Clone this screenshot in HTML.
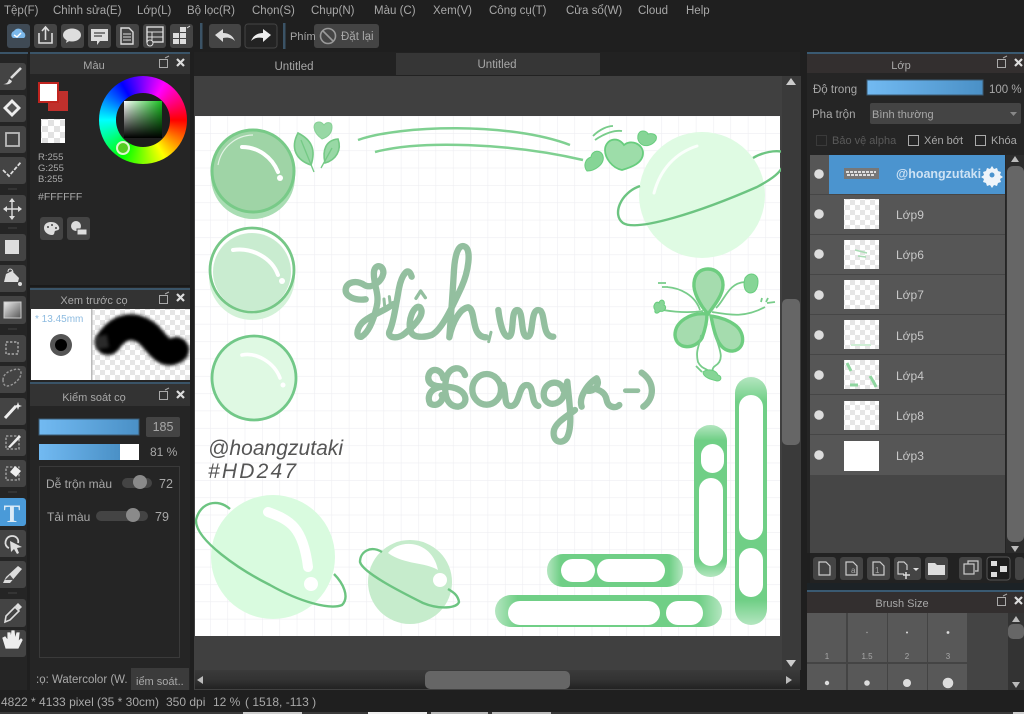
<!DOCTYPE html>
<html><head><meta charset="utf-8"><style>
html,body{margin:0;padding:0;background:#1f1f1f;width:1024px;height:714px;overflow:hidden}
#r{position:relative;width:1024px;height:714px;overflow:hidden;filter:blur(.35px)}
svg{position:absolute;left:0;top:0;font-size:11.5px}
text{font-family:"Liberation Sans",sans-serif;fill:#a8a8a8}
#wheel{position:absolute;left:99px;top:76px;width:88px;height:88px;border-radius:50%;background:conic-gradient(from 30deg,#f0f,#f00 60deg,#ff0 120deg,#0f0 180deg,#0ff 240deg,#00f 300deg,#f0f 360deg)}
#hole{position:absolute;left:17px;top:17px;width:54px;height:54px;border-radius:50%;background:#1d1d1d}
#sq{position:absolute;left:25px;top:25px;width:38px;height:37px;background:linear-gradient(to bottom,rgba(0,0,0,0),#000),linear-gradient(to right,#fff,#18c020)}
#sel{position:absolute;left:17px;top:65px;width:10px;height:10px;border:2.5px solid #dff5d0;border-radius:50%;background:#55cc22}
</style></head><body><div id="r">
<svg width="1024" height="714" viewBox="0 0 1024 714">
<defs>
<pattern id="ck" width="12" height="12" patternUnits="userSpaceOnUse"><rect width="12" height="12" fill="#fff"/><rect width="6" height="6" fill="#e2e2e2"/><rect x="6" y="6" width="6" height="6" fill="#e2e2e2"/></pattern>
<pattern id="ck2" width="10" height="10" patternUnits="userSpaceOnUse"><rect width="10" height="10" fill="#fff"/><rect width="5" height="5" fill="#e6e6e6"/><rect x="5" y="5" width="5" height="5" fill="#e6e6e6"/></pattern>
<pattern id="grid" x="210" y="133" width="17.35" height="17.35" patternUnits="userSpaceOnUse"><path d="M0 0V17.35M0 0H17.35" stroke="#eeeef2" stroke-width="1.2" fill="none"/></pattern>
<linearGradient id="blue" x1="0" x2="1" y1="0" y2="0"><stop offset="0" stop-color="#72baf2"/><stop offset="1" stop-color="#4a90c6"/></linearGradient>
<linearGradient id="hsb" x1="0" x2="0" y1="0" y2="1"><stop offset="0" stop-color="#3a3a3a"/><stop offset=".5" stop-color="#333"/><stop offset="1" stop-color="#222"/></linearGradient>
<linearGradient id="gry" x1="0" x2="1" y1="0" y2="1"><stop offset="0" stop-color="#eee"/><stop offset="1" stop-color="#555"/></linearGradient>
<linearGradient id="vp" x1="0" x2="0" y1="0" y2="1"><stop offset="0" stop-color="#b4e6c0"/><stop offset=".1" stop-color="#70cf86"/><stop offset=".9" stop-color="#70cf86"/><stop offset="1" stop-color="#b4e6c0"/></linearGradient>
<linearGradient id="hp" x1="0" x2="1" y1="0" y2="0"><stop offset="0" stop-color="#b4e6c0"/><stop offset=".1" stop-color="#70cf86"/><stop offset=".9" stop-color="#70cf86"/><stop offset="1" stop-color="#b4e6c0"/></linearGradient>
<filter id="b1" filterUnits="userSpaceOnUse" x="80" y="295" width="125" height="100"><feGaussianBlur stdDeviation="1.6"/></filter>
<clipPath id="cv"><rect x="195" y="116" width="586" height="520"/></clipPath>
<clipPath id="blobclip"><rect x="92" y="309" width="98" height="71"/></clipPath>
</defs>

<!-- base -->
<rect width="1024" height="714" fill="#1f1f1f"/>
<!-- menu -->
<g>
<text x="4" y="14">Tệp(F)</text><text x="53" y="14">Chỉnh sửa(E)</text><text x="137" y="14">Lớp(L)</text><text x="187" y="14">Bộ lọc(R)</text><text x="252" y="14">Chọn(S)</text><text x="311" y="14">Chụp(N)</text><text x="374" y="14">Màu (C)</text><text x="433" y="14">Xem(V)</text><text x="489" y="14">Công cụ(T)</text><text x="566" y="14">Cửa sổ(W)</text><text x="638" y="14">Cloud</text><text x="686" y="14">Help</text>
</g>
<!-- toolbar -->
<g fill="#444">
<rect x="7" y="24" width="23" height="24" rx="3" fill="#3f4a55"/><rect x="34" y="24" width="23" height="24" rx="3"/><rect x="61" y="24" width="23" height="24" rx="3"/><rect x="88" y="24" width="23" height="24" rx="3"/><rect x="116" y="24" width="23" height="24" rx="3"/><rect x="143" y="24" width="23" height="24" rx="3"/><rect x="170" y="24" width="23" height="24" rx="3"/>
<rect x="209" y="24" width="32" height="24" rx="3"/><rect x="245" y="24" width="32" height="24" rx="3" fill="#232323" stroke="#444"/><rect x="314" y="24" width="65" height="24" rx="3"/>
</g>
<rect x="200" y="23" width="2.5" height="26" fill="#3b5366"/><rect x="283" y="23" width="2.5" height="26" fill="#3b5366"/>
<!-- toolbar icons -->
<path d="M13 38a4 4 0 0 1 1-7 5 5 0 0 1 9 1 3.5 3.5 0 0 1 1 6z" fill="#7cb8ea"/><path d="M14 35l3 2 4-4" stroke="#fff" stroke-width="1.4" fill="none"/>
<path d="M39 33v10h13V33M45.5 40V28M42 31l3.5-4 3.5 4" stroke="#ddd" stroke-width="1.6" fill="none"/>
<ellipse cx="72" cy="35" rx="9" ry="6.5" fill="#ddd"/><path d="M67 39l-1 4 5-3z" fill="#ddd"/>
<path d="M91 29h17v12h-8l-3 4v-4h-6z" fill="#ddd"/><path d="M94 33h11M94 36h8" stroke="#444" stroke-width="1.3"/>
<path d="M121 28h8l4 4v12h-12z" fill="none" stroke="#ddd" stroke-width="1.4"/><path d="M123 34h8M123 37h8M123 40h8" stroke="#ddd"/>
<rect x="147" y="27" width="16" height="15" fill="none" stroke="#ddd" stroke-width="1.4"/><path d="M147 32h16M147 37h16M152 32v10" stroke="#ddd"/><circle cx="150" cy="43" r="3" fill="#444" stroke="#ddd"/>
<path d="M173 33h6v5h-6zM180 33h6v5h-6zM173 39h6v5h-6zM180 39h6v5h-6zM180 27h6v5h-6z" fill="#ddd"/><path d="M187 28l3-2" stroke="#ddd"/>
<path d="M215 35l8-6v4c6 0 10 3 12 8-3-3-7-4-12-3v4z" fill="#ddd"/>
<path d="M271 35l-8-6v4c-6 0-10 3-12 8 3-3 7-4 12-3v4z" fill="#eee"/>
<text x="290" y="40" font-size="11">Phím</text>
<circle cx="328" cy="36" r="7.5" fill="none" stroke="#999" stroke-width="1.6"/><path d="M323 31l10 10" stroke="#999" stroke-width="1.6"/>
<text x="341" y="40">Đặt lại</text>

<!-- left tool column -->
<rect x="0" y="52" width="27" height="638" fill="#252525"/><rect x="0" y="52" width="28" height="2" fill="#3a5468"/>
<g fill="#444">
<rect x="-4" y="63" width="30" height="27" rx="3"/><rect x="-4" y="95" width="30" height="27" rx="3"/><rect x="-4" y="126" width="30" height="27" rx="3"/><rect x="-4" y="157" width="30" height="27" rx="3"/>
<rect x="-4" y="195" width="30" height="28" rx="3"/><rect x="-4" y="234" width="30" height="27" rx="3"/><rect x="-4" y="265" width="30" height="27" rx="3"/><rect x="-4" y="296" width="30" height="28" rx="3"/>
<rect x="-4" y="335" width="30" height="27" rx="3"/><rect x="-4" y="366" width="30" height="27" rx="3"/><rect x="-4" y="398" width="30" height="27" rx="3"/><rect x="-4" y="429" width="30" height="27" rx="3"/><rect x="-4" y="460" width="30" height="27" rx="3"/>
<rect x="-4" y="498" width="30" height="28" rx="3" fill="#4a9ad8"/><rect x="-4" y="530" width="30" height="27" rx="3"/><rect x="-4" y="561" width="30" height="27" rx="3"/>
<rect x="-4" y="599" width="30" height="28" rx="3"/><rect x="-4" y="630" width="30" height="27" rx="3"/>
</g>
<path d="M8 189h9M8 228h9M8 329h9M8 492h9M8 593h9" stroke="#444"/>
<path d="M21 68L11 78" stroke="#ddd" stroke-width="2.6"/><path d="M3 84c3 0 5-1 6-5l3 2c-1 3-4 4-9 3z" fill="#ddd"/>
<path d="M3 108l9-9 9 9-9 9z" fill="#eee"/><path d="M7 108l5-5 5 5-5 5z" fill="#555"/>
<rect x="6" y="133" width="13" height="13" fill="none" stroke="#bbb" stroke-width="1.8"/>
<path d="M3 170l6 6 12-14" stroke="#ddd" stroke-width="1.8" fill="none" stroke-dasharray="4 1.5"/>
<path d="M12 199v20M4 209h17" stroke="#ddd" stroke-width="1.4" fill="none"/><path d="M12 198l-3 4h6zM12 220l-3-4h6zM3 209l4-3v6zM22 209l-4-3v6z" fill="#ddd"/>
<rect x="5" y="240" width="14" height="14" fill="#ddd"/>
<path d="M4 282l2-8 6-3 7 7-1 4z" fill="#ddd"/><path d="M8 272c0-4 4-4 5 0" stroke="#ddd" fill="none"/><circle cx="20" cy="284" r="2" fill="#ddd"/>
<rect x="4" y="302" width="17" height="16" fill="url(#gry)" stroke="#ccc"/>
<rect x="6" y="342" width="12" height="12" fill="none" stroke="#aaa" stroke-width="1.4" stroke-dasharray="2.4 1.6"/>
<path d="M3 380c0-7 8-10 14-11 4 0 5 4 3 8s-8 9-13 9c-3 0-4-3-4-6z" fill="none" stroke="#999" stroke-width="1.4" stroke-dasharray="2.4 1.6"/>
<path d="M5 418l11-12" stroke="#eee" stroke-width="3"/><path d="M18 402l1 3 3 1-3 1-1 3-1-3-3-1 3-1z" fill="#eee"/>
<rect x="6" y="436" width="13" height="13" fill="none" stroke="#aaa" stroke-width="1.3" stroke-dasharray="2.4 1.6"/><path d="M8 447l11-12 2 2-11 11z" fill="#eee"/>
<rect x="6" y="467" width="13" height="13" fill="none" stroke="#aaa" stroke-width="1.3" stroke-dasharray="2.4 1.6"/><path d="M10 472l5-6 6 5-5 6z" fill="#eee"/>
<text x="12" y="522" text-anchor="middle" style="font-family:'Liberation Serif',serif;font-size:25px;font-weight:bold;fill:#dcebf6">T</text>
<path d="M9 548c-6-2-4-12 3-12 5 0 7 4 6 7" fill="none" stroke="#ddd" stroke-width="1.8"/><path d="M10 541l12 6-5 1 2 5-2 1-3-5-3 3z" fill="#ddd"/>
<path d="M3 583l3-6 12-11 4 3-12 14z" fill="#ddd"/><path d="M5 580l5-5 4 5z" fill="#555"/>
<path d="M5 622l1-6 9-9 4 4-9 9z" fill="none" stroke="#ddd" stroke-width="1.6"/><path d="M15 606l3-3 4 4-3 3z" fill="#ddd"/>
<path d="M6 648l-3-10 2-1 3 4 0-8 2 0 1 7 1-9h2l1 9 2-7h2l-1 9 3-3 1 1-4 8z" fill="#eee" stroke="#eee" stroke-width="1.2"/>

<!-- left panels -->
<rect x="30" y="52" width="160" height="638" fill="#252525"/>
<rect x="30" y="52" width="160" height="2" fill="#3a5468"/><rect x="30" y="54" width="160" height="20" fill="#333"/>
<text x="94" y="69" text-anchor="middle" font-size="11">Màu</text>
<g id="ph1"><rect x="159.500" y="59.500" width="8" height="8" fill="none" stroke="#aaa"/><path d="M165 58l4-2" stroke="#aaa"/><path d="M177 59l7 7M184 59l-7 7" stroke="#ddd" stroke-width="2.2"/></g>
<rect x="48" y="91" width="20" height="20" fill="#c0302c"/>
<rect x="39" y="83" width="19" height="19" fill="#fff" stroke="#c0241f" stroke-width="2"/>
<rect x="41" y="119" width="24" height="24" fill="url(#ck)"/>
<text x="38" y="160" font-size="9.500">R:255</text><text x="38" y="171" font-size="9.500">G:255</text><text x="38" y="182" font-size="9.500">B:255</text>
<text x="38" y="200" font-size="10.5">#FFFFFF</text>
<rect x="40" y="217" width="23" height="23" rx="3" fill="#444"/><rect x="67" y="217" width="23" height="23" rx="3" fill="#444"/>
<path d="M51 222c-5 0-7 3-7 6 0 4 4 7 8 7 3 0 2-3 3-4 3-1 5-1 4-4-1-3-4-5-8-5z" fill="#ddd"/>
<circle cx="48" cy="227" r="1" fill="#444"/><circle cx="52" cy="225" r="1" fill="#444"/><circle cx="56" cy="228" r="1" fill="#444"/>
<circle cx="76" cy="226" r="5" fill="#ddd"/><rect x="77" y="229" width="10" height="6" fill="#ddd" stroke="#444"/>

<!-- brush preview -->
<rect x="30" y="285" width="160" height="2" fill="#1a1a1a"/><rect x="30" y="288" width="160" height="2" fill="#3a5468"/><rect x="30" y="290" width="160" height="19" fill="#333"/>
<text x="94" y="304" text-anchor="middle" font-size="11">Xem trước cọ</text>
<rect x="159.500" y="295.500" width="8" height="8" fill="none" stroke="#aaa"/><path d="M165 294l4-2" stroke="#aaa"/><path d="M177 294l7 7M184 294l-7 7" stroke="#ddd" stroke-width="2.2"/>
<rect x="31" y="309" width="61" height="71" fill="#fff"/><rect x="92" y="309" width="98" height="71" fill="url(#ck2)"/><rect x="91" y="309" width="1.500" height="71" fill="#bbb"/>
<text x="35" y="322" font-size="10" style="fill:#8dbbe0">* 13.45mm</text>
<circle cx="61" cy="345" r="11" fill="#555"/><circle cx="61" cy="345" r="6" fill="#000"/>
<g clip-path="url(#blobclip)"><path d="M108 342C120 324 135 324 148 334 158 344 165 358 176 350" stroke="#000" stroke-width="26" fill="none" stroke-linecap="round" filter="url(#b1)"/><path d="M96 343l12-2" stroke="#555" stroke-width="13" opacity=".5" filter="url(#b1)"/></g>

<!-- brush control -->
<rect x="30" y="382" width="160" height="2" fill="#3a5468"/><rect x="30" y="384" width="160" height="22" fill="#333"/>
<text x="94" y="401" text-anchor="middle" font-size="11">Kiểm soát cọ</text>
<rect x="159.500" y="391.500" width="8" height="8" fill="none" stroke="#aaa"/><path d="M165 390l4-2" stroke="#aaa"/><path d="M177 391l7 7M184 391l-7 7" stroke="#ddd" stroke-width="2.2"/>
<rect x="39" y="419" width="100" height="16" fill="url(#blue)" stroke="#3c5a72"/>
<rect x="146" y="417" width="34" height="20" rx="2" fill="#444"/><text x="163" y="431" text-anchor="middle" font-size="12.500">185</text>
<rect x="39" y="444" width="100" height="16" fill="#fff"/><rect x="39" y="444" width="81" height="16" fill="url(#blue)"/>
<text x="150" y="456" font-size="12">81 %</text>
<rect x="39.500" y="466.500" width="140" height="191" fill="none" stroke="#3a3a3a"/>
<text x="46" y="488" font-size="12">Dễ trộn màu</text><rect x="122" y="478" width="30" height="10" rx="5" fill="#444"/><circle cx="140" cy="482" r="7" fill="#8a8a8a"/><text x="159" y="488" font-size="12.500">72</text>
<text x="47" y="521" font-size="12">Tải màu</text><rect x="96" y="511" width="52" height="10" rx="5" fill="#444"/><circle cx="133" cy="515" r="7" fill="#8a8a8a"/><text x="155" y="521" font-size="12.500">79</text>
<rect x="30" y="667" width="100" height="23" fill="#252525"/><text x="36" y="683" font-size="11.500">:ọ: Watercolor (W.</text>
<rect x="131" y="668" width="58" height="22" fill="#3b3b3b"/><text x="136" y="685" font-size="11">iểm soát..</text>

<!-- tabs / canvas area -->
<rect x="194" y="52" width="606" height="24" fill="#222"/>
<rect x="396" y="53" width="204" height="22" fill="#363636"/>
<text x="294" y="70" text-anchor="middle" font-size="11.500">Untitled</text><text x="497" y="68" text-anchor="middle" font-size="11.500">Untitled</text>
<rect x="194" y="76" width="606" height="614" fill="#404040"/>
<rect x="195" y="116" width="585" height="520" fill="#fff"/>
<rect x="195" y="116" width="585" height="520" fill="url(#grid)"/>
<!-- scrollbars -->
<rect x="782" y="76" width="19" height="594" fill="#3a3a3a"/><rect x="782" y="299" width="18" height="146" rx="5" fill="#666"/>
<path d="M786 85l5-7 5 7z" fill="#ccc"/><path d="M786 660l5 7 5-7z" fill="#ccc"/>
<rect x="195" y="670" width="605" height="19" fill="url(#hsb)"/><rect x="425" y="671" width="145" height="18" rx="5" fill="#666"/>
<path d="M203 676l-6 4 6 4z" fill="#bbb"/><path d="M786 676l6 4-6 4z" fill="#bbb"/>

<!-- art -->
<g clip-path="url(#cv)">
<!-- bubble 1 -->
<circle cx="253" cy="177" r="42" fill="#a9ddb3"/>
<circle cx="253" cy="171" r="41" fill="#9fd4a6" stroke="#78ca88" stroke-width="3"/>
<path d="M218 165a36 36 0 0 1 35-30" stroke="#fff" stroke-width="1.2" fill="none" opacity=".7"/>
<path d="M242 147C258 147 272 157 278 172" stroke="#fff" stroke-width="4" fill="none" stroke-linecap="round"/><circle cx="280" cy="178" r="3" fill="#fff"/>
<!-- bubble 2 -->
<circle cx="252" cy="277" r="43" fill="#d3f2d8"/>
<circle cx="252" cy="270" r="42" fill="#fff" stroke="#76c787" stroke-width="2.8"/>
<circle cx="252" cy="272" r="39" fill="#c9ecd0"/>
<path d="M233 250C252 247 272 258 278 275" stroke="#fff" stroke-width="4" fill="none" stroke-linecap="round"/><circle cx="282" cy="281" r="3" fill="#fff"/>
<!-- bubble 3 -->
<circle cx="254" cy="378" r="42" fill="#dff9e3" stroke="#72c888" stroke-width="2.8"/>
<path d="M242 355C256 352 274 362 280 378" stroke="#fff" stroke-width="3.6" fill="none" stroke-linecap="round"/><circle cx="283" cy="385" r="2.500" fill="#fff"/>
<!-- leaves -->
<path d="M298 133C290 148 296 160 311 165 316 150 312 140 298 133Z" fill="#98d8a5" stroke="#74c985" stroke-width="1.6"/><path d="M301 140L314 172" stroke="#74c985" stroke-width="1.3"/>
<path d="M338 139C326 140 322 150 325 163 336 160 342 150 338 139Z" fill="#98d8a5" stroke="#74c985" stroke-width="1.6"/><path d="M332 148L321 168" stroke="#74c985" stroke-width="1.3"/>
<path d="M322 139C312 132 312 122 319 122 322 122 323 124 324 125 326 122 332 121 332 127 332 133 328 137 322 139Z" fill="#98d8a5" stroke="#86d095"/>
<!-- lines -->
<path d="M358 140C400 125 510 122 570 145M375 152C420 140 510 143 583 160" stroke="#7fd091" stroke-width="2.500" fill="none"/>
<!-- hearts -->
<path d="M593 136C600 129 608 126 613 126M595 140C605 133 615 130 622 131" stroke="#78cc8a" stroke-width="1.8" fill="none"/>
<path d="M622 170C612 168 605 158 605 150 605 140 617 135 624 145 631 139 643 144 643 153 643 163 632 167 622 170Z" fill="#9ddda9" stroke="#68cd7e" stroke-width="1.800"/>
<path d="M587 171C583 166 585 159 591 157 592 150 601 149 603 156 605 164 595 171 587 171Z" fill="#86d596" stroke="#68cd7e"/>
<path d="M656 140C652 146 645 147 641 144 636 140 637 131 643 131 646 131 648 133 648 134 652 133 658 134 656 140Z" fill="#86d596" stroke="#68cd7e"/>
<!-- top right planet -->
<circle cx="702" cy="195" r="63" fill="#dffbe3"/>
<path d="M697 146C675 153 660 170 654 193" stroke="#fff" stroke-width="3" fill="none" stroke-linecap="round" opacity=".85"/>
<path d="M640 186C620 193 612 215 623 223 637 232 700 212 757 187 772 179 782 172 784 163M753 158C763 152 775 150 784 152" stroke="#6cc481" stroke-width="2.4" fill="none"/>
<!-- clover -->
<path d="M708 314C700 305 693 292 694 283 695 272 702 269 708 269 716 269 723 275 723 285 723 295 714 306 708 314Z" fill="#a5dcae" stroke="#6ecd80" stroke-width="3.400"/>
<path d="M707 314C690 312 675 322 675 335 676 350 695 350 702 338 705 330 707 322 707 314Z" fill="#a5dcae" stroke="#6ecd80" stroke-width="3.400"/>
<path d="M711 316C714 332 718 352 733 351 746 349 745 332 735 325 727 319 718 317 711 316Z" fill="#a5dcae" stroke="#6ecd80" stroke-width="3.400"/>
<path d="M700 310C695 295 680 288 667 287M658 283h8M662 287h6M716 308C725 300 728 283 745 282M712 312C730 315 745 318 765 307M703 311C690 313 675 312 663 310M701 335C700 345 695 350 698 362 702 370 708 368 710 373M715 335C720 350 725 360 715 366 712 368 712 372 714 372M767 303l8-1M762 298l-1 4M768 298l-2 4M696 366l6 6" stroke="#78cc8a" stroke-width="1.8" fill="none"/>
<path d="M655 310C652 306 656 300 659 303 660 298 666 300 664 305 668 307 664 313 660 311 658 314 654 314 655 310Z" fill="#86d596" stroke="#68cd7e"/>
<path d="M745 278C750 271 758 274 758 281 758 287 756 293 750 293 744 292 743 285 745 278Z" fill="#86d596" stroke="#68cd7e"/>
<path d="M703 372C708 368 716 370 718 375 722 376 722 381 717 381 713 380 703 378 703 372Z" fill="#86d596" stroke="#68cd7e"/>
<!-- handwriting -->
<g transform="translate(330 230) scale(.3333)" fill="none" stroke="#93bf9f" stroke-width="19" stroke-linecap="round" stroke-linejoin="round">
<path d="M107 208C75 212 45 200 47 178 50 155 80 150 103 165 125 178 155 155 160 130 162 105 135 100 132 125 128 160 150 190 140 230 132 265 118 305 95 320 78 325 78 300 95 280 112 260 170 240 190 222"/>
<path d="M162 207l2 22M178 200l3 24" stroke-width="9"/>
<path d="M245 140C235 105 215 135 207 175 198 225 190 280 178 305 172 325 205 328 225 310 262 280 285 250 270 232 252 222 230 275 243 305 250 325 285 322 305 315 335 300 365 235 395 170 415 125 425 60 405 50 385 40 375 75 372 120 368 190 362 270 358 322 368 275 390 235 415 232 440 240 420 320 468 322"/>
<path d="M258 205l14-22 14 20" stroke-width="10"/>
<path d="M483 307l-7 28" stroke-width="9"/>
<path d="M505 240C510 280 520 320 535 320 555 320 540 240 562 240 582 240 570 320 592 320 612 320 600 240 625 240 650 240 632 322 670 320"/>
<path d="M340 445C335 415 300 410 295 440 292 470 330 470 345 470 300 470 290 500 300 520 320 535 345 510 335 495"/>
<path d="M405 435C395 405 360 410 350 440 340 480 345 530 385 530 420 525 415 470 345 470"/>
<ellipse cx="470" cy="478" rx="43" ry="46"/>
<path d="M520 465C530 500 520 530 545 528 570 525 565 465 590 465 615 465 600 520 625 528"/>
<path d="M700 480C695 450 650 450 642 485 635 525 680 535 700 500L712 455C718 520 730 590 710 625 695 645 665 635 672 600 680 575 710 560 735 540"/>
<path d="M755 530C745 500 775 460 800 445 815 470 780 490 770 480 790 470 825 480 830 510 835 535 860 535 868 525"/>
<path d="M886 482h38" stroke-width="14"/>
<path d="M935 428C975 455 975 505 940 530"/>
</g>
<!-- signature -->
<text x="208" y="455" textLength="135" lengthAdjust="spacingAndGlyphs" style="font-size:21px;font-style:italic;fill:#555">@hoangzutaki</text>
<text x="208" y="478" textLength="88" lengthAdjust="spacing" style="font-size:21px;font-style:italic;fill:#555">#HD247</text>
<!-- bottom-left planet -->
<circle cx="273" cy="557" r="62" fill="#d9fbdf"/>
<path d="M268 512C290 520 303 527 308 567" stroke="#fff" stroke-width="10" fill="none" stroke-linecap="round"/><circle cx="311" cy="584" r="7" fill="#fff"/>
<path d="M230 509C218 498 200 502 196 520 195 540 240 570 270 585 300 602 330 610 342 605 350 597 343 583 334 574" stroke="#6cc481" stroke-width="2.4" fill="none"/>
<!-- small planet -->
<circle cx="410" cy="582" r="42" fill="#c6eccc"/>
<path d="M388 553C400 538 432 540 438 570 425 562 405 565 388 553Z" fill="#fff"/><circle cx="440" cy="580" r="7" fill="#fff"/>
<path d="M382 552C370 545 360 552 360 562 363 573 403 593 423 603 440 610 457 608 459 602 458 595 453 592 448 589" stroke="#6cc481" stroke-width="2.4" fill="none"/>
<!-- pills -->
<rect x="735" y="377" width="32" height="248" rx="16" fill="url(#vp)"/>
<rect x="739" y="395" width="24" height="145" rx="12" fill="#fff"/><rect x="739" y="548" width="24" height="49" rx="12" fill="#fff"/>
<rect x="694" y="425" width="33" height="152" rx="16" fill="url(#vp)"/>
<rect x="701" y="444" width="23" height="29" rx="11.500" fill="#fff"/><rect x="699" y="478" width="24" height="88" rx="12" fill="#fff"/>
<rect x="547" y="554" width="136" height="33" rx="16" fill="url(#hp)"/>
<rect x="561" y="559" width="34" height="23" rx="11.500" fill="#fff"/><rect x="597" y="559" width="68" height="23" rx="11.500" fill="#fff"/>
<rect x="495" y="595" width="227" height="32" rx="16" fill="url(#hp)"/>
<rect x="508" y="601" width="152" height="24" rx="12" fill="#fff"/><rect x="666" y="601" width="37" height="24" rx="12" fill="#fff"/>
</g>

<!-- right panel -->
<rect x="807" y="52" width="217" height="2" fill="#3a5a72"/><rect x="807" y="54" width="217" height="19" fill="#332f2f"/>
<text x="901" y="69" text-anchor="middle" font-size="11">Lớp</text>
<rect x="997.500" y="59.500" width="8" height="8" fill="none" stroke="#aaa"/><path d="M1003 58l4-2" stroke="#aaa"/><path d="M1015 59l7 7M1022 59l-7 7" stroke="#ddd" stroke-width="2.2"/>
<rect x="807" y="73" width="217" height="480" fill="#252525"/>
<text x="813" y="93" font-size="11.500">Độ trong</text>
<rect x="867" y="80" width="116" height="15" fill="url(#blue)" stroke="#3c5a72"/>
<text x="989" y="93" font-size="11.500">100 %</text>
<text x="812" y="118" font-size="11.500">Pha trộn</text>
<rect x="870" y="103" width="151" height="21" rx="2" fill="#444"/><text x="872" y="118" font-size="11">Bình thường</text><path d="M1010 112h7l-3.500 4z" fill="#888"/>
<rect x="816.500" y="135.500" width="10" height="10" fill="none" stroke="#3a3a3a"/><text x="832" y="144" font-size="11" style="fill:#5a5a5a">Bảo vệ alpha</text>
<rect x="908.500" y="135.500" width="10" height="10" fill="none" stroke="#aaa"/><text x="924" y="144" font-size="11">Xén bớt</text>
<rect x="975.500" y="135.500" width="10" height="10" fill="none" stroke="#aaa"/><text x="991" y="144" font-size="11">Khóa</text>
<!-- layers -->
<rect x="810" y="155" width="195" height="398" fill="#464646"/>
<g fill="#565656">
<rect x="810" y="155" width="19" height="39"/><rect x="810" y="195" width="195" height="39"/><rect x="810" y="235" width="195" height="39"/><rect x="810" y="275" width="195" height="39"/><rect x="810" y="315" width="195" height="39"/><rect x="810" y="355" width="195" height="39"/><rect x="810" y="395" width="195" height="39"/><rect x="810" y="435" width="195" height="40"/>
</g>
<rect x="829" y="155" width="176" height="39" fill="#4b94cf"/>
<g fill="#ddd"><circle cx="819" cy="174" r="4.800"/><circle cx="819" cy="214" r="4.800"/><circle cx="819" cy="254" r="4.800"/><circle cx="819" cy="295" r="4.800"/><circle cx="819" cy="335" r="4.800"/><circle cx="819" cy="375" r="4.800"/><circle cx="819" cy="415" r="4.800"/><circle cx="819" cy="455" r="4.800"/></g>
<rect x="844" y="168" width="35" height="11" fill="#777"/><path d="M846 172h30M847 175h28" stroke="#fff" stroke-width="1.500" stroke-dasharray="3 1"/>
<rect x="844" y="199" width="35" height="30" fill="url(#ck2)"/><rect x="844" y="240" width="35" height="29" fill="url(#ck2)"/><path d="M855 250l12 3M858 256l8 1" stroke="#a9dcb4" stroke-width="1.500"/>
<rect x="844" y="280" width="35" height="29" fill="url(#ck2)"/><rect x="844" y="320" width="35" height="29" fill="url(#ck2)"/><path d="M851 345h20" stroke="#cfeed5" stroke-width="2"/>
<rect x="844" y="360" width="35" height="29" fill="url(#ck2)"/><path d="M847 363l4 8M870 376c3 5 5 8 6 11M850 385h8" stroke="#8fd6a0" stroke-width="3"/>
<rect x="844" y="401" width="35" height="29" fill="url(#ck2)"/><rect x="844" y="441" width="35" height="30" fill="#fff"/>
<text x="896" y="178" style="font-size:12.500px;font-weight:bold;fill:#cde2f4">@hoangzutaki</text>
<path d="M992 166l2 3 3-1 1 3 3 1-1 3 3 2-3 2 1 3-3 1-1 3-3-1-2 3-2-3-3 1-1-3-3-1 1-3-3-2 3-2-1-3 3-1 1-3 3 1z" fill="#eef4fa"/><circle cx="992" cy="175" r="2.500" fill="#4b94cf"/>
<g style="fill:#c8c8c8"><text x="896" y="219" font-size="12" style="fill:#c8c8c8">Lớp9</text><text x="896" y="259" font-size="12" style="fill:#c8c8c8">Lớp6</text><text x="896" y="299" font-size="12" style="fill:#c8c8c8">Lớp7</text><text x="896" y="340" font-size="12" style="fill:#c8c8c8">Lớp5</text><text x="896" y="380" font-size="12" style="fill:#c8c8c8">Lớp4</text><text x="896" y="420" font-size="12" style="fill:#c8c8c8">Lớp8</text><text x="896" y="460" font-size="12" style="fill:#c8c8c8">Lớp3</text></g>
<!-- layer scrollbar -->
<rect x="1006" y="155" width="18" height="398" fill="#2c2c2c"/><rect x="1007" y="166" width="17" height="376" rx="6" fill="#666"/>
<path d="M1011 162l4-6 4 6z" fill="#bbb"/><path d="M1011 546l4 6 4-6z" fill="#bbb"/>
<!-- layer toolbar -->
<rect x="810" y="553" width="214" height="30" fill="#222"/>
<g fill="#444"><rect x="813" y="557" width="23" height="23" rx="3"/><rect x="840" y="557" width="23" height="23" rx="3"/><rect x="867" y="557" width="23" height="23" rx="3"/><rect x="894" y="557" width="27" height="23" rx="3"/><rect x="925" y="557" width="23" height="23" rx="3"/><rect x="959" y="557" width="23" height="23" rx="3"/><rect x="1015" y="557" width="9" height="23" rx="3"/></g>
<rect x="987" y="557" width="23" height="23" rx="3" fill="#1d1d1d" stroke="#555"/>
<g fill="none" stroke="#ccc" stroke-width="1.200"><path d="M819 562h7l4 4v9h-11z"/><path d="M846 562h7l4 4v9h-11z"/><path d="M873 562h7l4 4v9h-11z"/><path d="M898 562h6l3 3v5M898 562v12h6"/><rect x="964" y="564" width="10" height="10"/><path d="M968 564v-3h10v10h-3"/></g>
<text x="851" y="573" font-size="8">a</text><text x="875" y="573" font-size="8">1</text>
<path d="M906 572v7M903 575h7" stroke="#ddd" stroke-width="1.500"/><path d="M913 568h6l-3 3z" fill="#ddd"/>
<path d="M928 563h7l2 2h8v10h-17z" fill="#ddd"/>
<path d="M991 561h6v5h-6zM991 572h6v5h-6zM1000 566h7v6h-7z" fill="#ddd"/>
<!-- brush size -->
<rect x="807" y="583" width="217" height="7" fill="#1c2226"/>
<rect x="807" y="590" width="217" height="2" fill="#3a5a72"/><rect x="807" y="592" width="217" height="21" fill="#332f2f"/>
<text x="902" y="607" text-anchor="middle" font-size="11">Brush Size</text>
<rect x="997.500" y="597.500" width="8" height="8" fill="none" stroke="#aaa"/><path d="M1003 596l4-2" stroke="#aaa"/><path d="M1015 597l7 7M1022 597l-7 7" stroke="#ddd" stroke-width="2.2"/>
<rect x="807" y="613" width="201" height="78" fill="#444"/>
<g fill="#585858"><rect x="807" y="613" width="39" height="49"/><rect x="848" y="613" width="39" height="49"/><rect x="888" y="613" width="39" height="49"/><rect x="928" y="613" width="39" height="49"/><rect x="807" y="664" width="39" height="27"/><rect x="848" y="664" width="39" height="27"/><rect x="888" y="664" width="39" height="27"/><rect x="928" y="664" width="39" height="27"/></g>
<g fill="#ddd"><circle cx="867" cy="632.500" r=".7" opacity=".6"/><circle cx="907" cy="632.500" r="1"/><circle cx="948" cy="632.500" r="1.400"/><circle cx="827" cy="683" r="2.200"/><circle cx="867" cy="683" r="2.800"/><circle cx="907" cy="683" r="4"/><circle cx="948" cy="683" r="5.300"/></g>
<text x="827" y="659" text-anchor="middle" font-size="8">1</text><text x="867" y="659" text-anchor="middle" font-size="8">1.5</text><text x="907" y="659" text-anchor="middle" font-size="8">2</text><text x="948" y="659" text-anchor="middle" font-size="8">3</text>
<rect x="1008" y="613" width="16" height="78" fill="#333"/><rect x="1008" y="624" width="16" height="15" rx="5" fill="#666"/><path d="M1012 622l4-6 4 6z" fill="#bbb"/><path d="M1012 682l4 6 4-6z" fill="#bbb"/>

<!-- status -->
<rect x="0" y="690" width="1024" height="24" fill="#1f1f1f"/>
<text x="1" y="706" font-size="12">4822 * 4133 pixel</text><text x="97" y="706" font-size="12">(35 * 30cm)</text><text x="166" y="706" font-size="12">350 dpi</text><text x="213" y="706" font-size="12">12 %</text><text x="245" y="706" font-size="12">( 1518, -113 )</text>
<rect x="0" y="712" width="1024" height="2" fill="#3a3a3a"/>
<rect x="243" y="712" width="59" height="2" fill="#ccc"/><rect x="368" y="712" width="59" height="2" fill="#eee"/><rect x="431" y="712" width="57" height="2" fill="#bbb"/><rect x="492" y="712" width="59" height="2" fill="#bbb"/><rect x="1013" y="712" width="11" height="2" fill="#ccc"/>
</svg>
<div id="wheel"><div id="hole"></div><div id="sq"></div><div id="sel"></div></div>
</div></body></html>
